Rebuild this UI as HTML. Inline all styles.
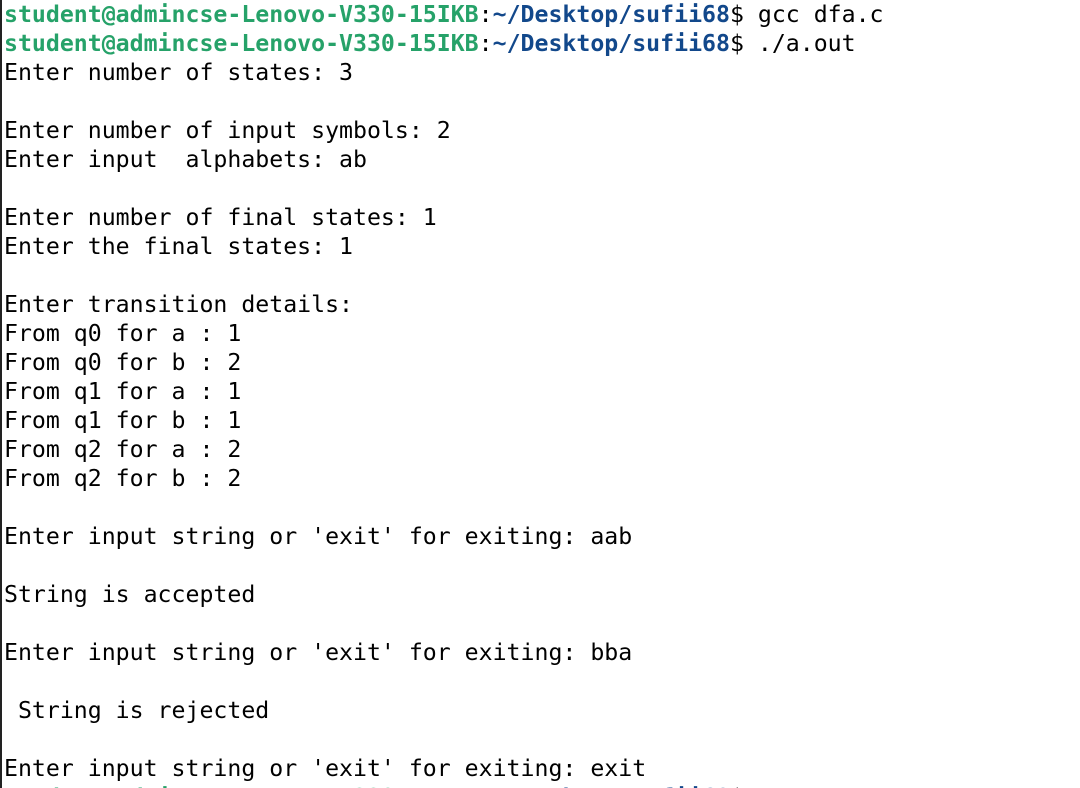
<!DOCTYPE html>
<html><head><meta charset="utf-8"><style>
html,body{margin:0;padding:0;background:#fff;width:1080px;height:788px;overflow:hidden}
body{border-left:2px solid #222;box-sizing:border-box}
pre{margin:0;padding:0 0 0 2px;font-family:"DejaVu Sans Mono","Liberation Mono",monospace;font-size:23.2px;line-height:29px;color:#000;position:relative;top:0px}
.g{color:#26a269;font-weight:bold}.b{color:#12488b;font-weight:bold}
</style></head><body><pre><span class="g">student@admincse-Lenovo-V330-15IKB</span>:<span class="b">~/Desktop/sufii68</span>$ gcc dfa.c
<span class="g">student@admincse-Lenovo-V330-15IKB</span>:<span class="b">~/Desktop/sufii68</span>$ ./a.out
Enter number of states: 3

Enter number of input symbols: 2
Enter input  alphabets: ab

Enter number of final states: 1
Enter the final states: 1

Enter transition details:
From q0 for a : 1
From q0 for b : 2
From q1 for a : 1
From q1 for b : 1
From q2 for a : 2
From q2 for b : 2

Enter input string or 'exit' for exiting: aab

String is accepted

Enter input string or 'exit' for exiting: bba

 String is rejected

Enter input string or 'exit' for exiting: exit
<span class="g">student@admincse-Lenovo-V330-15IKB</span>:<span class="b">~/Desktop/sufii68</span>$ </pre></body></html>
